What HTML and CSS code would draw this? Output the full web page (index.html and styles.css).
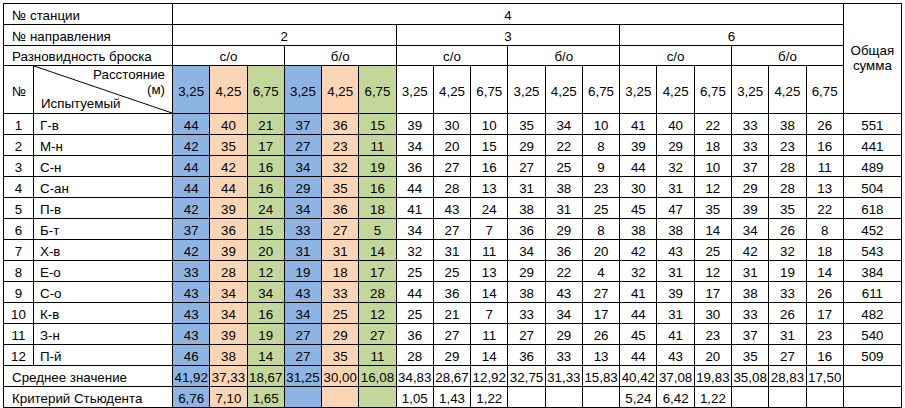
FILE: index.html
```html
<!DOCTYPE html>
<html lang="ru">
<head>
<meta charset="utf-8">
<title>Таблица результатов</title>
<link rel="stylesheet" href="styles.css">
</head>
<body>
<table class="sheet">
<colgroup>
<col class="c-num"><col class="c-name">
<col class="c-v"><col class="c-v"><col class="c-v"><col class="c-v"><col class="c-v"><col class="c-v">
<col class="c-v"><col class="c-v"><col class="c-v"><col class="c-v"><col class="c-v"><col class="c-v">
<col class="c-v"><col class="c-v"><col class="c-v"><col class="c-v"><col class="c-v"><col class="c-v">
<col class="c-sum">
</colgroup>
<tbody>
<tr class="h1">
<td colspan="2" class="lbl">№ станции</td>
<td colspan="18">4</td>
<td rowspan="4" class="sum-head">Общая<br>сумма</td>
</tr>
<tr class="h2">
<td colspan="2" class="lbl">№ направления</td>
<td colspan="6">2</td><td colspan="6">3</td><td colspan="6">6</td>
</tr>
<tr class="h3">
<td colspan="2" class="lbl">Разновидность броска</td>
<td colspan="3">с/о</td><td colspan="3">б/о</td>
<td colspan="3">с/о</td><td colspan="3">б/о</td>
<td colspan="3">с/о</td><td colspan="3">б/о</td>
</tr>
<tr class="h4">
<td class="lbl mid">№</td>
<td class="diag">
<svg class="diag-line" viewBox="0 0 100 100" preserveAspectRatio="none"><line x1="0" y1="0" x2="100" y2="100" stroke="#000" stroke-width="1" vector-effect="non-scaling-stroke"/></svg>
<div class="diag-r">Расстояние</div>
<div class="diag-r">(м)</div>
<div class="diag-l">Испытуемый</div>
</td>
<td class="b mid">3,25</td><td class="o mid">4,25</td><td class="g mid">6,75</td>
<td class="b mid">3,25</td><td class="o mid">4,25</td><td class="g mid">6,75</td>
<td class="mid">3,25</td><td class="mid">4,25</td><td class="mid">6,75</td>
<td class="mid">3,25</td><td class="mid">4,25</td><td class="mid">6,75</td>
<td class="mid">3,25</td><td class="mid">4,25</td><td class="mid">6,75</td>
<td class="mid">3,25</td><td class="mid">4,25</td><td class="mid">6,75</td>
</tr>
<tr><td>1</td><td class="name">Г-в</td><td class="b">44</td><td class="o">40</td><td class="g">21</td><td class="b">37</td><td class="o">36</td><td class="g">15</td><td>39</td><td>30</td><td>10</td><td>35</td><td>34</td><td>10</td><td>41</td><td>40</td><td>22</td><td>33</td><td>38</td><td>26</td><td>551</td></tr>
<tr><td>2</td><td class="name">М-н</td><td class="b">42</td><td class="o">35</td><td class="g">17</td><td class="b">27</td><td class="o">23</td><td class="g">11</td><td>34</td><td>20</td><td>15</td><td>29</td><td>22</td><td>8</td><td>39</td><td>29</td><td>18</td><td>33</td><td>23</td><td>16</td><td>441</td></tr>
<tr><td>3</td><td class="name">С-н</td><td class="b">44</td><td class="o">42</td><td class="g">16</td><td class="b">34</td><td class="o">32</td><td class="g">19</td><td>36</td><td>27</td><td>16</td><td>27</td><td>25</td><td>9</td><td>44</td><td>32</td><td>10</td><td>37</td><td>28</td><td>11</td><td>489</td></tr>
<tr><td>4</td><td class="name">С-ан</td><td class="b">44</td><td class="o">44</td><td class="g">16</td><td class="b">29</td><td class="o">35</td><td class="g">16</td><td>44</td><td>28</td><td>13</td><td>31</td><td>38</td><td>23</td><td>30</td><td>31</td><td>12</td><td>29</td><td>28</td><td>13</td><td>504</td></tr>
<tr><td>5</td><td class="name">П-в</td><td class="b">42</td><td class="o">39</td><td class="g">24</td><td class="b">34</td><td class="o">36</td><td class="g">18</td><td>41</td><td>43</td><td>24</td><td>38</td><td>31</td><td>25</td><td>45</td><td>47</td><td>35</td><td>39</td><td>35</td><td>22</td><td>618</td></tr>
<tr><td>6</td><td class="name">Б-т</td><td class="b">37</td><td class="o">36</td><td class="g">15</td><td class="b">33</td><td class="o">27</td><td class="g">5</td><td>34</td><td>27</td><td>7</td><td>36</td><td>29</td><td>8</td><td>38</td><td>38</td><td>14</td><td>34</td><td>26</td><td>8</td><td>452</td></tr>
<tr><td>7</td><td class="name">Х-в</td><td class="b">42</td><td class="o">39</td><td class="g">20</td><td class="b">31</td><td class="o">31</td><td class="g">14</td><td>32</td><td>31</td><td>11</td><td>34</td><td>36</td><td>20</td><td>42</td><td>43</td><td>25</td><td>42</td><td>32</td><td>18</td><td>543</td></tr>
<tr><td>8</td><td class="name">Е-о</td><td class="b">33</td><td class="o">28</td><td class="g">12</td><td class="b">19</td><td class="o">18</td><td class="g">17</td><td>25</td><td>25</td><td>13</td><td>29</td><td>22</td><td>4</td><td>32</td><td>31</td><td>12</td><td>31</td><td>19</td><td>14</td><td>384</td></tr>
<tr><td>9</td><td class="name">С-о</td><td class="b">43</td><td class="o">34</td><td class="g">34</td><td class="b">43</td><td class="o">33</td><td class="g">28</td><td>44</td><td>36</td><td>14</td><td>38</td><td>43</td><td>27</td><td>41</td><td>39</td><td>17</td><td>38</td><td>33</td><td>26</td><td>611</td></tr>
<tr><td>10</td><td class="name">К-в</td><td class="b">43</td><td class="o">34</td><td class="g">16</td><td class="b">34</td><td class="o">25</td><td class="g">12</td><td>25</td><td>21</td><td>7</td><td>33</td><td>34</td><td>17</td><td>44</td><td>31</td><td>30</td><td>33</td><td>26</td><td>17</td><td>482</td></tr>
<tr><td>11</td><td class="name">З-н</td><td class="b">43</td><td class="o">39</td><td class="g">19</td><td class="b">27</td><td class="o">29</td><td class="g">27</td><td>36</td><td>27</td><td>11</td><td>27</td><td>29</td><td>26</td><td>45</td><td>41</td><td>23</td><td>37</td><td>31</td><td>23</td><td>540</td></tr>
<tr><td>12</td><td class="name">П-й</td><td class="b">46</td><td class="o">38</td><td class="g">14</td><td class="b">27</td><td class="o">35</td><td class="g">11</td><td>28</td><td>29</td><td>14</td><td>36</td><td>33</td><td>13</td><td>44</td><td>43</td><td>20</td><td>35</td><td>27</td><td>16</td><td>509</td></tr>
<tr class="avg"><td colspan="2" class="lbl">Среднее значение</td><td class="b">41,92</td><td class="o">37,33</td><td class="g">18,67</td><td class="b">31,25</td><td class="o">30,00</td><td class="g">16,08</td><td>34,83</td><td>28,67</td><td>12,92</td><td>32,75</td><td>31,33</td><td>15,83</td><td>40,42</td><td>37,08</td><td>19,83</td><td>35,08</td><td>28,83</td><td>17,50</td><td></td></tr>
<tr><td colspan="2" class="lbl">Критерий Стьюдента</td><td class="b">6,76</td><td class="o">7,10</td><td class="g">1,65</td><td class="b"></td><td class="o"></td><td class="g"></td><td>1,05</td><td>1,43</td><td>1,22</td><td></td><td></td><td></td><td>5,24</td><td>6,42</td><td>1,22</td><td></td><td></td><td></td><td></td></tr>
</tbody>
</table>
</body>
</html>
```

FILE: styles.css
```css
html, body {
  margin: 0;
  padding: 0;
  background: #ffffff;
}

body {
  font-family: "Liberation Sans", Arial, sans-serif;
  font-size: 13.33px;
  color: #000000;
}

.sheet {
  margin: 3px 0 0 3px;
  border-collapse: collapse;
  table-layout: fixed;
  width: 898px;
}

.c-num { width: 30px; }
.c-name { width: 139px; }
.c-v { width: 37.28px; }
.c-sum { width: 58px; }

.sheet tr { height: 21px; }
.sheet tr.h3 { height: 20px; }
.sheet tr.h4 { height: 48px; }

.sheet td {
  border: 1px solid #000000;
  padding: 0 2px 1px 2px;
  text-align: center;
  vertical-align: bottom;
  line-height: 15px;
  white-space: nowrap;
  overflow: hidden;
}

.sheet tr.h4 td {
  vertical-align: middle;
}

.sheet td.lbl {
  text-align: left;
  padding-left: 8px;
}

.sheet td.name {
  text-align: left;
  padding-left: 6px;
}

.sheet td.mid {
  vertical-align: middle;
  padding-top: 3px;
  padding-bottom: 0;
}

.sheet td.sum-head {
  vertical-align: middle;
  white-space: normal;
}

.sheet tr.avg td { padding-left: 0; padding-right: 0; }
.sheet tr.avg td.lbl { padding-left: 8px; }

.sheet td.diag {
  position: relative;
  padding: 1px 7px 0 7px;
  vertical-align: top;
}

.diag-line {
  position: absolute;
  left: 0;
  top: 0;
  width: 100%;
  height: 100%;
}

.diag-r {
  text-align: right;
  line-height: 14.5px;
}

.diag-l {
  text-align: left;
  line-height: 14.5px;
}

.b { background: #8db4e2; }
.o { background: #fcd5b4; }
.g { background: #c4d79b; }
```
